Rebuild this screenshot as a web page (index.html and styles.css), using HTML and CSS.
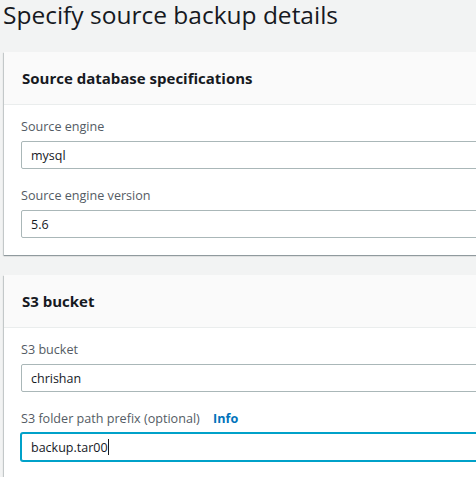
FILE: index.html
```html
<!DOCTYPE html>
<html>
<head>
<meta charset="utf-8">
<link rel="stylesheet" href="styles.css">
</head>
<body>
<div class="page">
  <h1 class="title">Specify source backup details</h1>
  <section class="card">
    <div class="card-header"><h2>Source database specifications</h2></div>
    <div class="card-body">
      <div class="field">
        <label class="label">Source engine</label>
        <div class="input">mysql</div>
      </div>
      <div class="field">
        <label class="label">Source engine version</label>
        <div class="input">5.6</div>
      </div>
    </div>
  </section>
  <section class="card">
    <div class="card-header"><h2>S3 bucket</h2></div>
    <div class="card-body">
      <div class="field">
        <label class="label">S3 bucket</label>
        <div class="input">chrishan</div>
      </div>
      <div class="field">
        <label class="label">S3 folder path prefix (optional) <a class="info">Info</a></label>
        <div class="input focused">backup.tar00<span class="caret"></span></div>
      </div>
    </div>
  </section>
</div>
</body>
</html>
```
FILE: styles.css
```css
html, body {
  margin: 0;
  padding: 0;
  background: #f2f3f3;
  overflow: hidden;
  width: 476px;
  height: 477px;
}
.page {
  font-family: "Open Sans", "Noto Sans", sans-serif;
  color: #16191f;
  width: 700px;
}
.title {
  margin: 0 0 22px 3px;
  font-size: 24.5px;
  line-height: 30px;
  font-weight: 400;
  color: #16191f;
}
.card {
  margin: 0 0 20px 4px;
  background: #fff;
  box-shadow: 0 1px 1px 0 rgba(0,28,36,.3), -1px 1px 1px 0 rgba(0,28,36,.15);
}
.card-header {
  height: 52px;
  display: flex;
  align-items: center;
  padding: 0 18px;
  background: #fafafa;
  border-bottom: 1px solid #eaeded;
}
.card-header h2 {
  margin: 0;
  font-size: 15px;
  font-weight: 700;
  color: #16191f;
}
.card-body {
  padding: 12px 17px 17px;
  display: flex;
  flex-direction: column;
  gap: 17px;
}
.field {
  display: flex;
  flex-direction: column;
  gap: 4px;
}
.label {
  font-size: 12.6px;
  line-height: 20px;
  color: #545b64;
}
.info {
  margin-left: 10px;
  color: #0073bb;
  font-weight: 700;
}
.input {
  height: 28px;
  box-sizing: border-box;
  border: 1px solid #aab7b8;
  border-radius: 2px;
  padding: 0 9px;
  display: flex;
  align-items: center;
  font-size: 12.5px;
  color: #16191f;
  background: #fff;
}
.input.focused {
  border-color: #00a1c9;
  box-shadow: 0 0 0 1px #00a1c9;
}
.caret {
  display: inline-block;
  width: 1px;
  height: 16px;
  background: #16191f;
}
```
